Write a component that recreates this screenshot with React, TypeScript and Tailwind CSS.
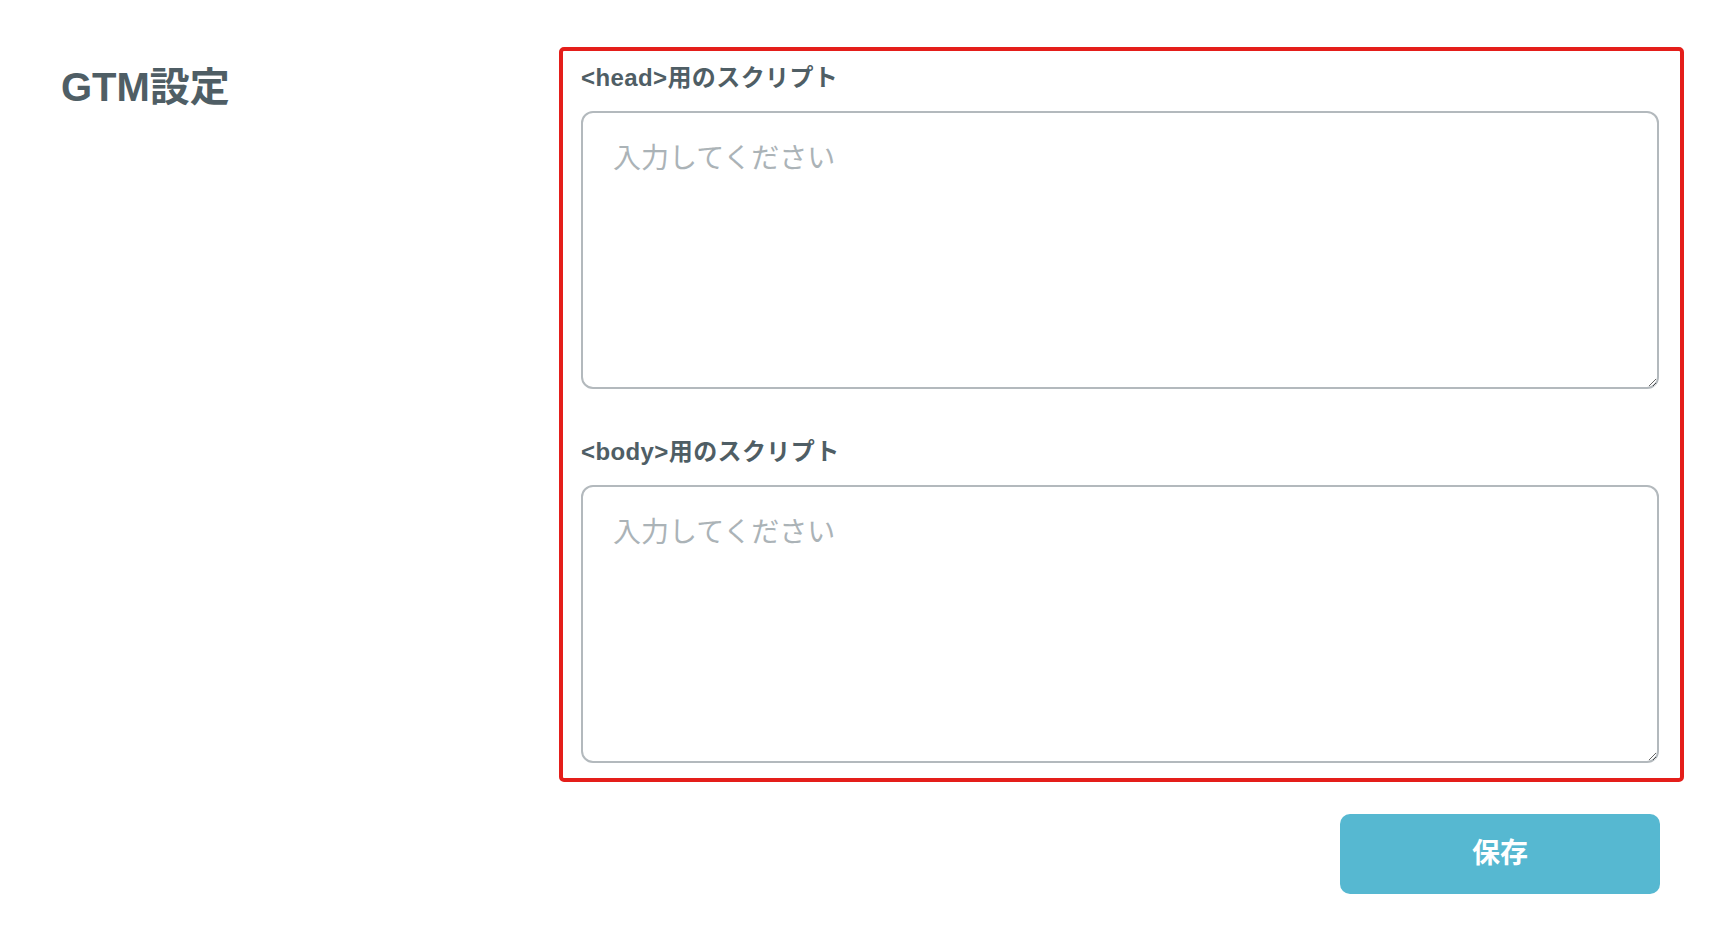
import React from "react";

const font = {
  fontFamily:
    '"Liberation Sans", "Noto Sans CJK JP", "Noto Sans", sans-serif',
};

function Field({ label }: { label: string }) {
  return (
    <div className="flex flex-col">
      <label className="text-[24px] tracking-[0.4px] leading-[33px] font-bold text-[#4f5e65] mb-[17px]">
        {label}
      </label>
      <textarea
        placeholder="入力してください"
        className="w-full h-[278px] border-2 border-[#b3b9bd] rounded-[12px] px-[30px] pt-[25px] text-[28px] leading-[42px] text-[#333] placeholder:text-[#abb3b7] outline-none bg-white"
        style={font}
      />
    </div>
  );
}

export default function App() {
  return (
    <div
      className="w-[1732px] h-[944px] bg-white flex overflow-hidden"
      style={font}
    >
      <div className="w-[559px] shrink-0 pl-[61px] pt-[57px]">
        <h1 className="text-[40px] leading-[60px] font-bold text-[#4f5e65]">
          GTM設定
        </h1>
      </div>
      <div className="w-[1125px] shrink-0 flex flex-col pt-[47px]">
        <div className="border-4 border-[#e41e1a] rounded-[5px] pl-[18px] pr-[21px] pt-[10px] pb-[15px] flex flex-col gap-[46px]">
          <Field label="<head>用のスクリプト" />
          <Field label="<body>用のスクリプト" />
        </div>
        <div className="flex justify-end pr-[24px] mt-[32px]">
          <button className="w-[320px] h-[80px] rounded-[10px] bg-[#56b8d1] text-white text-[28px] font-bold">
            保存
          </button>
        </div>
      </div>
    </div>
  );
}
